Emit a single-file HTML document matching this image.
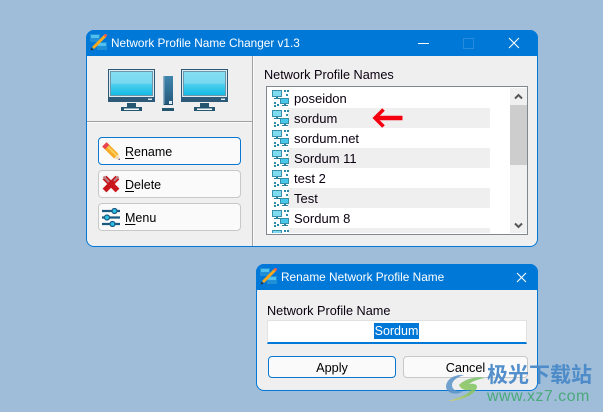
<!DOCTYPE html>
<html><head><meta charset="utf-8">
<style>
html,body{margin:0;padding:0}
body{width:603px;height:412px;overflow:hidden;background:#9fbdd8;position:relative;font-family:"Liberation Sans","Noto Sans CJK SC",sans-serif;font-size:12.7px;color:#000}
.a{position:absolute}
.win{position:absolute;box-sizing:border-box;background:#efefef;border:1px solid #0078d7;border-radius:8px;overflow:hidden}
.tb{position:absolute;left:-1px;top:-1px;right:-1px;background:#0078d7;color:#fff;font-size:12px}
.btn{position:absolute;box-sizing:border-box;background:#fafafa;border:1px solid #c8c8c8;border-radius:4px;height:28px;left:98px;width:143px}
.btn span{position:absolute;left:26px;top:7px;font-size:12.5px;line-height:15px}
.row{position:absolute;left:267px;width:243px;height:20px}
.row b{font-weight:normal;position:absolute;left:27px;top:3px;line-height:16px;font-size:13px;color:#0a0010}
.row i{position:absolute;left:21px;top:0;width:202px;height:20px}
.row svg{position:absolute;left:5px;top:2px}
u{text-decoration-thickness:1px;text-underline-offset:2px}
</style></head><body>
<svg width="0" height="0" style="position:absolute">
<defs>
<linearGradient id="scr" x1="0" y1="0" x2="0" y2="1"><stop offset="0" stop-color="#84dff3"/><stop offset=".5" stop-color="#78d8f0"/><stop offset=".52" stop-color="#4fcfee"/><stop offset="1" stop-color="#14bbe6"/></linearGradient>
<linearGradient id="tw" x1="0" y1="0" x2="0" y2="1"><stop offset="0" stop-color="#3f86ae"/><stop offset="1" stop-color="#24577a"/></linearGradient>
<linearGradient id="gy" x1="1" y1="0" x2="0" y2="1"><stop offset="0" stop-color="#6fc06a"/><stop offset=".6" stop-color="#8fc65a"/><stop offset="1" stop-color="#d8d46a"/></linearGradient>
</defs>
<symbol id="net" viewBox="0 0 17 17">
<rect x="0" y="0" width="10" height="7" fill="#3a8fa8"/><rect x="1" y="1" width="8" height="5" fill="#7fdcf0"/>
<rect x="4" y="7" width="2" height="1" fill="#2a7f9c"/>
<rect x="2" y="8" width="6" height="1" fill="#2a7f9c"/>
<rect x="12" y="0" width="2" height="2" fill="#2a8ca6"/><rect x="15" y="0" width="2" height="2" fill="#2a8ca6"/>
<rect x="14" y="4" width="2" height="2" fill="#2a8ca6"/>
<rect x="2" y="12" width="2" height="2" fill="#2a8ca6"/><rect x="2" y="15" width="2" height="2" fill="#2a8ca6"/><rect x="5" y="14" width="2" height="2" fill="#2a8ca6"/>
<rect x="8" y="8" width="9" height="6" fill="#3a8fa8"/><rect x="9" y="9" width="7" height="4" fill="#45c8ea"/>
<rect x="12" y="14" width="2" height="1" fill="#2a7f9c"/><rect x="10" y="15" width="6" height="1" fill="#2a7f9c"/>
</symbol>
<symbol id="app" viewBox="0 0 17 17">
<rect x="0" y="0" width="10" height="8" fill="#1f8fd8"/><rect x="7" y="8" width="10" height="8" fill="#1f8fd8"/>
<rect x="1" y="1" width="8" height="3" fill="#4fc0f0"/><rect x="8" y="9" width="8" height="3" fill="#4fc0f0"/>
<path d="M15 2 L3 14" stroke="#f9a81c" stroke-width="3"/>
<path d="M16.5 .5 L14.5 2.5" stroke="#f2604a" stroke-width="3"/>
<path d="M.7 16.5 L1.3 13.6 L3.6 15.8 Z" fill="#333"/>
</symbol>
<symbol id="mon" viewBox="0 0 47 42">
<rect x="0" y="0" width="47" height="33" fill="#2c5a78"/>
<rect x="1" y="1" width="45" height="27" fill="#dfeaf0"/>
<rect x="2" y="2" width="43" height="25" fill="#6f97aa"/>
<rect x="3" y="3" width="41" height="23" fill="url(#scr)"/>
<rect x="40" y="29.5" width="4" height="1.5" fill="#d8e6ec"/>
<rect x="19" y="34" width="9" height="5" fill="#25566f"/>
<rect x="13" y="38" width="21" height="4" fill="#25566f"/>
<rect x="16" y="39.5" width="15" height="1.5" fill="#f4f8fa"/>
</symbol>
</svg>

<!-- main window -->
<div class="win" style="left:86px;top:30px;width:452px;height:217px"></div>
<div class="tb a" style="left:86px;top:30px;right:auto;width:452px;height:26px;border-radius:8px 8px 0 0"></div>
<svg class="a" style="left:90px;top:34px" width="17" height="17"><use href="#app" width="17" height="17"/></svg>
<div class="a" style="left:111px;top:35px;color:#fff;font-size:11.8px;line-height:16px">Network Profile Name Changer v1.3</div>
<div class="a" style="left:418px;top:43px;width:11px;height:1px;background:#fff"></div>
<div class="a" style="left:463px;top:38px;width:9px;height:9px;border:1px solid #2a8adb"></div>
<svg class="a" style="left:508px;top:37px" width="12" height="12"><path d="M1 1L11 11M11 1L1 11" stroke="#fff" stroke-width="1.1"/></svg>

<svg class="a" style="left:108px;top:69px" width="47" height="42"><use href="#mon" width="47" height="42"/></svg>
<svg class="a" style="left:181px;top:69px" width="47" height="42"><use href="#mon" width="47" height="42"/></svg>
<svg class="a" style="left:162px;top:76px" width="12" height="36">
<rect x="1" y="0" width="10" height="29" fill="url(#tw)"/><rect x="1" y="0" width="1.5" height="29" fill="#8fb0c4"/>
<rect x="7" y="25" width="3" height="3" fill="#e2edf2"/>
<rect x="2" y="28" width="9" height="1" fill="#1f4d68"/><rect x="0" y="32" width="12" height="3" fill="#25566f"/>
</svg>

<div class="a" style="left:252px;top:56px;width:1px;height:190px;background:#a0a0a0"></div>
<div class="a" style="left:253px;top:56px;width:1px;height:190px;background:#fafafa"></div>
<div class="a" style="left:87px;top:121px;width:165px;height:1px;background:#a0a0a0"></div>
<div class="a" style="left:87px;top:122px;width:165px;height:1px;background:#fafafa"></div>

<div class="btn" style="top:137px;border-color:#0a78d0"><span><u>R</u>ename</span>
<svg class="a" style="left:3px;top:4px" width="19" height="19"><path d="M.5 5 L5 .5 L16.5 12 L12 16.5 Z" fill="#f7ab28"/><path d="M3.5 2.5 L15 14" stroke="#fbd25f" stroke-width="1.8"/><path d="M4.5 .2 L.2 4.5 L3 7.3 L7.3 3 Z" fill="#e8434f"/><path d="M12 16.5 L16.5 12 L18 18 Z" fill="#f3dfb8"/><path d="M16.2 17.5L18 18L17.5 16.2Z" fill="#3b2f8f"/></svg>
</div>
<div class="btn" style="top:170px"><span><u>D</u>elete</span>
<svg class="a" style="left:3px;top:4px" width="19" height="19"><path d="M2.5 2.5L15.5 15.5M15.5 2.5L2.5 15.5" stroke="#c9161d" stroke-width="5.4"/><path d="M1.5 1.5L7 7M16.5 1.5L12 6" stroke="#b98083" stroke-width="2.2"/></svg>
</div>
<div class="btn" style="top:203px"><span><u>M</u>enu</span>
<svg class="a" style="left:3px;top:4px" width="19" height="19"><g stroke="#1a5a80" stroke-width="2.2" fill="none"><path d="M0 3H18M0 9.5H18M0 16H18"/></g><circle cx="12.5" cy="3" r="2.5" fill="#2cc0e8" stroke="#1a5a80" stroke-width="1.2"/><circle cx="5" cy="9.5" r="2.5" fill="#2cc0e8" stroke="#1a5a80" stroke-width="1.2"/><circle cx="10.5" cy="16" r="2.5" fill="#2cc0e8" stroke="#1a5a80" stroke-width="1.2"/></svg>
</div>

<div class="a" style="left:264px;top:67px;line-height:16px;color:#0a0010">Network Profile Names</div>

<!-- list -->
<div class="a" style="left:266px;top:86px;width:262px;height:149px;box-sizing:border-box;border:1px solid #82878e;background:#fff"></div>
<div class="a" style="left:510px;top:88px;width:17px;height:145px;background:#f0f0f0"></div>
<div class="a" style="left:510px;top:105px;width:17px;height:60px;background:#cdcdcd"></div>
<svg class="a" style="left:513px;top:92px" width="11" height="9"><path d="M2 6.5L5.5 3L9 6.5" fill="none" stroke="#555" stroke-width="2"/></svg>
<svg class="a" style="left:513px;top:221px" width="11" height="9"><path d="M2 2.5L5.5 6L9 2.5" fill="none" stroke="#555" stroke-width="2"/></svg>

<div class="row" style="top:88px"><svg width="17" height="17"><use href="#net"/></svg><b>poseidon</b></div>
<div class="row" style="top:108px"><i style="background:#efefef"></i><svg width="17" height="17"><use href="#net"/></svg><b>sordum</b></div>
<div class="row" style="top:128px"><svg width="17" height="17"><use href="#net"/></svg><b>sordum.net</b></div>
<div class="row" style="top:148px"><i style="background:#efefef"></i><svg width="17" height="17"><use href="#net"/></svg><b>Sordum 11</b></div>
<div class="row" style="top:168px"><svg width="17" height="17"><use href="#net"/></svg><b>test 2</b></div>
<div class="row" style="top:188px"><i style="background:#efefef"></i><svg width="17" height="17"><use href="#net"/></svg><b>Test</b></div>
<div class="row" style="top:208px"><svg width="17" height="17"><use href="#net"/></svg><b>Sordum 8</b></div>
<div class="row" style="top:228px;height:5px;overflow:hidden"><i style="background:#efefef"></i><svg width="17" height="17"><use href="#net"/></svg></div>

<svg class="a" style="left:371px;top:107px" width="32" height="22"><path d="M6 11H31.5" stroke="#f5000e" stroke-width="4.6"/><path d="M12.5 2.5L4 11L12.5 19.5" fill="none" stroke="#f5000e" stroke-width="3.6"/></svg>

<!-- dialog -->
<div class="win" style="left:256px;top:264px;width:282px;height:127px"></div>
<div class="tb a" style="left:256px;top:264px;right:auto;width:282px;height:26px;border-radius:8px 8px 0 0"></div>
<svg class="a" style="left:260px;top:268px" width="17" height="17"><use href="#app" width="17" height="17"/></svg>
<div class="a" style="left:281px;top:269px;color:#fff;font-size:11.85px;line-height:16px">Rename Network Profile Name</div>
<svg class="a" style="left:516px;top:272px" width="11" height="11"><path d="M1 1L10 10M10 1L1 10" stroke="#fff" stroke-width="1.1"/></svg>

<div class="a" style="left:267px;top:303px;line-height:16px;color:#0a0010">Network Profile Name</div>
<div class="a" style="left:267px;top:320px;width:260px;height:24px;box-sizing:border-box;background:#fff;border:1px solid #e2e2e2;border-bottom:2px solid #0078d7"></div>
<div class="a" style="left:374px;top:323px;width:45px;height:16px;background:#0078d7;color:#fff;line-height:16px;text-align:center;font-size:12.5px">Sordum</div>

<div class="a" style="left:268px;top:356px;width:128px;height:22px;box-sizing:border-box;background:#fafafa;border:1px solid #0a78d0;border-radius:4px;text-align:center;line-height:22px">Apply</div>
<div class="a" style="left:403px;top:356px;width:125px;height:22px;box-sizing:border-box;background:#fafafa;border:1px solid #c8c8c8;border-radius:4px;text-align:center;line-height:22px">Cancel</div>

<!-- watermark -->
<svg class="a" style="left:444px;top:372px;opacity:.85" width="44" height="32" viewBox="0 0 44 32">
<path d="M2 15C2 7 11 2 20 3C13 5 8 9 8 13C8 18 13 20 19 19C15 23 3 23 2 15Z" fill="#5b93c9"/>
<path d="M15 13C20 7 33 4 41 6C35 7 29 9 25 12C33 11 35 14 31 19C26 25 14 29 4 29C14 26 24 23 27 18C23 19 17 18 15 13Z" fill="url(#gy)"/>
</svg>
<div class="a" style="left:487px;top:362px;font-size:21px;line-height:24px;color:#4a8ac9;font-weight:bold;font-family:'Noto Sans CJK SC','Liberation Sans',sans-serif;white-space:nowrap;opacity:.95">极光下载站</div>
<div class="a" style="left:487px;top:388px;font-size:16px;line-height:18px;color:#4aa87c;font-family:'Liberation Sans',sans-serif;white-space:nowrap;letter-spacing:.45px">www.xz7.com</div>
</body></html>
